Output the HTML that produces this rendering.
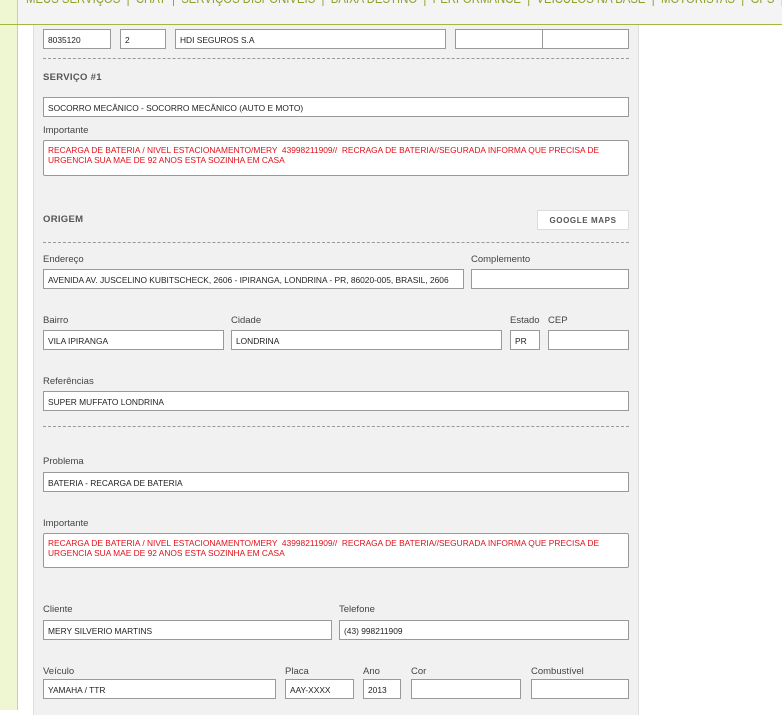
<!DOCTYPE html>
<html><head><meta charset="utf-8"><style>
*{box-sizing:border-box;margin:0;padding:0}
body{width:782px;height:710px;overflow:hidden;background:#fff;font-family:"Liberation Sans",sans-serif;position:relative}
.strip{position:absolute;left:0;top:0;width:18px;height:710px;background:#eef6d2;border-right:1px solid #c8d88a}
.nav{position:absolute;left:0;top:0;width:782px;height:25px;background:#f4f4f4;border-bottom:1px solid #a4b840;overflow:hidden}
.nav .l{position:absolute;left:0;top:0;width:18px;height:24px;background:#eef6d2;border-right:1px solid #c8d88a}
.nav .t{position:absolute;left:26px;top:-9px;font-size:13.5px;color:#8ca028;white-space:nowrap;transform:scaleX(.84);transform-origin:0 0}
.panel{position:absolute;left:33px;top:25px;width:606px;height:690px;background:#f1f1f1;border-left:1px solid #ddd;border-right:1px solid #ddd}
.i{position:absolute;height:20px;background:#fff;border:1px solid #999;font-size:8.4px;color:#222;padding:5px 0 0 4px;white-space:nowrap;overflow:hidden}
.ta{position:absolute;background:#fff;border:1px solid #999;border-radius:2px;font-size:8.4px;color:#e0101a;padding:4px 0 0 4px;line-height:10px;white-space:nowrap;overflow:hidden}
.lb{position:absolute;font-size:9.5px;color:#444}
.h{position:absolute;font-size:9.5px;color:#555;font-weight:bold;letter-spacing:.3px}
.d{position:absolute;left:43px;width:586px;border-top:1px dashed #999}
.btn{position:absolute;left:537px;top:210px;width:92px;height:20px;background:#fff;border:1px solid #ddd;font-size:8px;font-weight:bold;color:#555;text-align:center;padding-top:5px;letter-spacing:.6px}
</style></head><body>
<div class="strip"></div>
<div class="panel"></div>
<div class="nav"><div class="l"></div><div class="t">MEUS SERVIÇOS &nbsp;|&nbsp; CHAT &nbsp;|&nbsp; SERVIÇOS DISPONÍVEIS &nbsp;|&nbsp; BAIXA DESTINO &nbsp;|&nbsp; PERFORMANCE &nbsp;|&nbsp; VEÍCULOS NA BASE &nbsp;|&nbsp; MOTORISTAS &nbsp;|&nbsp; GPS &nbsp;|&nbsp; BUSCA</div></div>

<div class="i" style="left:43px;top:29px;width:68px">8035120</div>
<div class="i" style="left:120px;top:29px;width:46px">2</div>
<div class="i" style="left:175px;top:29px;width:271px">HDI SEGUROS S.A</div>
<div class="i" style="left:455px;top:29px;width:88px"></div>
<div class="i" style="left:542px;top:29px;width:87px"></div>
<div class="d" style="top:58px"></div>

<div class="h" style="left:43px;top:72px">SERVIÇO #1</div>
<div class="i" style="left:43px;top:97px;width:586px">SOCORRO MECÂNICO - SOCORRO MECÂNICO (AUTO E MOTO)</div>
<div class="lb" style="left:43px;top:125px">Importante</div>
<div class="ta" style="left:43px;top:140px;width:586px;height:36px">RECARGA DE BATERIA / NIVEL ESTACIONAMENTO/MERY &nbsp;43998211909// &nbsp;RECRAGA DE BATERIA//SEGURADA INFORMA QUE PRECISA DE<br>URGENCIA SUA MAE DE 92 ANOS ESTA SOZINHA EM CASA</div>

<div class="h" style="left:43px;top:214px">ORIGEM</div>
<div class="btn">GOOGLE MAPS</div>
<div class="d" style="top:242px"></div>

<div class="lb" style="left:43px;top:254px">Endereço</div>
<div class="lb" style="left:471px;top:254px">Complemento</div>
<div class="i" style="left:43px;top:269px;width:421px">AVENIDA AV. JUSCELINO KUBITSCHECK, 2606 - IPIRANGA, LONDRINA - PR, 86020-005, BRASIL, 2606</div>
<div class="i" style="left:471px;top:269px;width:158px"></div>

<div class="lb" style="left:43px;top:315px">Bairro</div>
<div class="lb" style="left:231px;top:315px">Cidade</div>
<div class="lb" style="left:510px;top:315px">Estado</div>
<div class="lb" style="left:548px;top:315px">CEP</div>
<div class="i" style="left:43px;top:330px;width:181px">VILA IPIRANGA</div>
<div class="i" style="left:231px;top:330px;width:271px">LONDRINA</div>
<div class="i" style="left:510px;top:330px;width:30px">PR</div>
<div class="i" style="left:548px;top:330px;width:81px"></div>

<div class="lb" style="left:43px;top:376px">Referências</div>
<div class="i" style="left:43px;top:391px;width:586px">SUPER MUFFATO LONDRINA</div>
<div class="d" style="top:426px"></div>

<div class="lb" style="left:43px;top:456px">Problema</div>
<div class="i" style="left:43px;top:472px;width:586px">BATERIA - RECARGA DE BATERIA</div>

<div class="lb" style="left:43px;top:518px">Importante</div>
<div class="ta" style="left:43px;top:533px;width:586px;height:35px">RECARGA DE BATERIA / NIVEL ESTACIONAMENTO/MERY &nbsp;43998211909// &nbsp;RECRAGA DE BATERIA//SEGURADA INFORMA QUE PRECISA DE<br>URGENCIA SUA MAE DE 92 ANOS ESTA SOZINHA EM CASA</div>

<div class="lb" style="left:43px;top:604px">Cliente</div>
<div class="lb" style="left:339px;top:604px">Telefone</div>
<div class="i" style="left:43px;top:620px;width:289px">MERY SILVERIO MARTINS</div>
<div class="i" style="left:339px;top:620px;width:290px">(43) 998211909</div>

<div class="lb" style="left:43px;top:666px">Veículo</div>
<div class="lb" style="left:285px;top:666px">Placa</div>
<div class="lb" style="left:363px;top:666px">Ano</div>
<div class="lb" style="left:411px;top:666px">Cor</div>
<div class="lb" style="left:531px;top:666px">Combustível</div>
<div class="i" style="left:43px;top:679px;width:233px">YAMAHA / TTR</div>
<div class="i" style="left:285px;top:679px;width:69px">AAY-XXXX</div>
<div class="i" style="left:363px;top:679px;width:38px">2013</div>
<div class="i" style="left:411px;top:679px;width:110px"></div>
<div class="i" style="left:531px;top:679px;width:98px"></div>
</body></html>
